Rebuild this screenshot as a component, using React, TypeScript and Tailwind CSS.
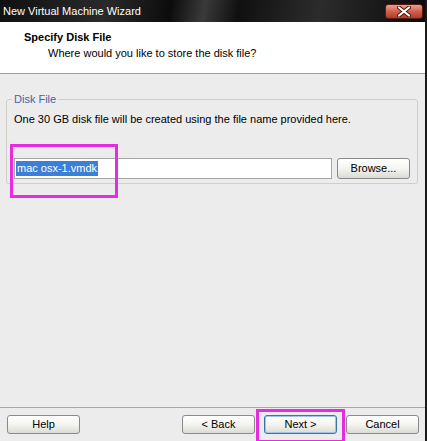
import React from "react";

const font = { fontFamily: '"Liberation Sans", Arial, sans-serif' };

const Btn = ({ label, primary, className }: { label: string; primary?: boolean; className?: string }) => (
  <button
    className={
      "h-[19px] rounded-[3px] border bg-gradient-to-b from-white via-[#f4f4f0] to-[#dcdcd6] text-[11px] text-black leading-none " +
      (primary ? "border-[#3a73a8] shadow-[inset_0_0_0_1px_#9fc6ea] " : "border-[#8a8a8a] ") +
      (className ?? "")
    }
  >
    {label}
  </button>
);

export default function App() {
  return (
    <div className="relative w-[427px] h-[441px] overflow-hidden bg-[#ececec] flex" style={font}>
      <div className="flex flex-col w-[425px] h-full">
        {/* Title bar */}
        <div className="h-[22px] shrink-0 flex items-center justify-between pl-[3px] pr-[2px] bg-[linear-gradient(100deg,#101010_0%,#2a2a2a_25%,#0c0c0c_40%,#3a3a3a_48%,#101010_56%,#2c2c2c_75%,#0a0a0a_100%)]">
          <span className="text-white text-[11px] leading-none">New Virtual Machine Wizard</span>
          <div className="w-[38px] h-[15px] rounded-[3px] border border-[#5a1a10] bg-gradient-to-b from-[#e9a090] via-[#d0604c] to-[#b23c28] flex items-center justify-center">
            <svg width="14" height="11" viewBox="0 0 14 11">
              <path d="M2 1.5 L12 9.5 M12 1.5 L2 9.5" stroke="#4a1208" strokeWidth="4" strokeLinecap="round" />
              <path d="M2 1.5 L12 9.5 M12 1.5 L2 9.5" stroke="#ffffff" strokeWidth="2.2" strokeLinecap="round" />
            </svg>
          </div>
        </div>

        {/* Header */}
        <div className="h-[52px] shrink-0 bg-white border-b border-[#a0a0a0] pt-[8px]">
          <div className="pl-[24px] text-[11px] font-bold leading-[14px] text-black">Specify Disk File</div>
          <div className="pl-[48px] mt-[2px] text-[11px] leading-[14px] text-black">Where would you like to store the disk file?</div>
        </div>

        {/* Body */}
        <div className="flex-1 px-[6px] pt-[19px]">
          <fieldset className="w-[412px] border border-[#cfcfc6] rounded-[3px] pl-[5px] pr-[6px] pb-[4px]">
            <legend className="px-[2px] text-[11px] leading-[13px] text-[#3f64a8]">Disk File</legend>
            <div className="pl-[2px] mt-[7px] text-[11px] leading-[13px] text-black">
              One 30 GB disk file will be created using the file name provided here.
            </div>
            <div className="flex items-center mt-[32px] pl-[2px] gap-[5px]">
              <div className="w-[318px] h-[21px] bg-white border border-[#a6a6a6] flex items-center pl-[1px]">
                <span className="bg-[#3b7fd8] text-white text-[11px] leading-[15px] px-[1px]">mac osx-1.vmdk</span>
              </div>
              <Btn label="Browse..." className="w-[73px] !h-[21px]" />
            </div>
          </fieldset>
        </div>

        {/* Footer */}
        <div className="h-[34px] shrink-0 border-t border-[#a8a8a8] flex items-start pt-[7px] pl-[7px] pr-[6px]">
          <Btn label="Help" className="w-[73px]" />
          <div className="flex-1" />
          <Btn label="< Back" className="w-[73px]" />
          <Btn label="Next >" primary className="w-[73px] ml-[9px]" />
          <Btn label="Cancel" className="w-[73px] ml-[9px]" />
        </div>
      </div>
      <div className="w-[2px] h-full bg-[#1a1a1a]" />

      {/* Annotation boxes */}
      <div className="absolute left-[10px] top-[144px] w-[108px] h-[54px] border-[3px] border-[#e82be0]" />
      <div className="absolute left-[256px] top-[409px] w-[89px] h-[34px] border-[3px] border-[#e82be0]" />
    </div>
  );
}
